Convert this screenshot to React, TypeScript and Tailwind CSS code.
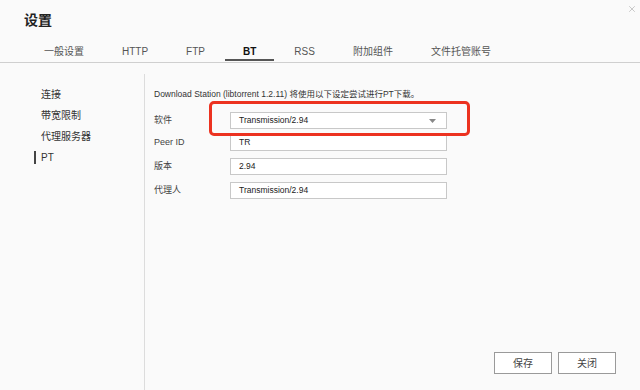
import { X } from 'lucide-react'

const tabs = ['一般设置', 'HTTP', 'FTP', 'BT', 'RSS', '附加组件', '文件托管账号']
const menu = ['连接', '带宽限制', '代理服务器', 'PT']

const fields = [
  { label: 'Peer ID', value: 'TR', mt: 'mt-[5px]' },
  { label: '版本', value: '2.94', mt: 'mt-[7px]' },
  { label: '代理人', value: 'Transmission/2.94', mt: 'mt-[7px]' },
]

export default function App() {
  return (
    <div
      className="relative flex h-[390px] w-[640px] flex-col overflow-hidden bg-[#fafafa] text-[#444]"
      style={{ fontFamily: '"Liberation Sans", "Noto Sans CJK SC", sans-serif' }}
    >
      {/* Header */}
      <div className="flex h-[41px] items-start justify-between pl-[24px] pr-[3px]">
        <h1 className="mt-[11px] text-[14px] font-bold leading-[18px] text-[#222]">设置</h1>
        <X className="mt-[4px] h-[10px] w-[10px] text-[#aaa]" strokeWidth={1.5} />
      </div>

      {/* Tabs */}
      <div className="flex h-[22px] gap-[2px] border-b border-[#cfcfcf] pl-[26px]">
        {tabs.map((tab) => {
          const active = tab === 'BT'
          return (
            <div key={tab} className="flex h-[21px] flex-col items-center px-[18px] pt-[4px]">
              <span
                className={`text-[10px] leading-[14px] ${
                  active ? 'font-bold text-[#111]' : 'text-[#555]'
                }`}
              >
                {tab}
              </span>
              <span className={`mt-auto mb-[1px] h-[2px] w-[calc(100%+36px)] ${active ? 'bg-[#555]' : ''}`} />
            </div>
          )
        })}
      </div>

      {/* Body */}
      <div className="flex flex-1">
        <div className="mt-[11px] w-[145px] border-r border-[#dcdcdc] pt-[10px]">
          {menu.map((item) =>
            item === 'PT' ? (
              <div key={item} className="flex h-[21px] items-center pl-[34px] text-[10px] text-[#333]">
                <span className="mr-[5px] h-[13px] w-[2px] bg-[#444]" />
                {item}
              </div>
            ) : (
              <div key={item} className="flex h-[21px] items-center pl-[41px] text-[10px] text-[#333]">
                {item}
              </div>
            )
          )}
        </div>

        <div className="flex flex-1 flex-col pl-[9px] pt-[25px]">
          <p className="text-[8.5px] leading-[12px] text-[#333]">
            Download Station (libtorrent 1.2.11) 将使用以下设定尝试进行PT下载。
          </p>

          {/* Software select */}
          <div className="relative mt-[12px] flex items-center">
            <span className="w-[76px] text-[9px] text-[#444]">软件</span>
            <div className="flex h-[17px] w-[217px] items-center justify-between border border-[#c8c8c8] bg-white pl-[8px] pr-[10px]">
              <span className="text-[8.5px] text-[#222]">Transmission/2.94</span>
              <svg width="7" height="4" viewBox="0 0 7 4">
                <path d="M0 0h7L3.5 4z" fill="#888" />
              </svg>
            </div>
            {/* annotation box */}
            <div className="pointer-events-none absolute left-[55px] top-[-11px] h-[35px] w-[261px] rounded-[5px] border-[3px] border-[#ec3220]" />
          </div>

          {fields.map((f) => (
            <div key={f.label} className={`flex items-center ${f.mt}`}>
              <span className="w-[76px] text-[9px] text-[#444]">{f.label}</span>
              <div className="flex h-[17px] w-[217px] items-center border border-[#c8c8c8] bg-white pl-[8px]">
                <span className="text-[8.5px] text-[#222]">{f.value}</span>
              </div>
            </div>
          ))}

          {/* Footer buttons */}
          <div className="mt-auto flex justify-end gap-[6px] pb-[16px] pr-[24px]">
            <button className="h-[22px] w-[58px] border border-[#9a9a9a] bg-white text-[10px] text-[#444]">
              保存
            </button>
            <button className="h-[22px] w-[58px] border border-[#9a9a9a] bg-white text-[10px] text-[#444]">
              关闭
            </button>
          </div>
        </div>
      </div>
    </div>
  )
}
